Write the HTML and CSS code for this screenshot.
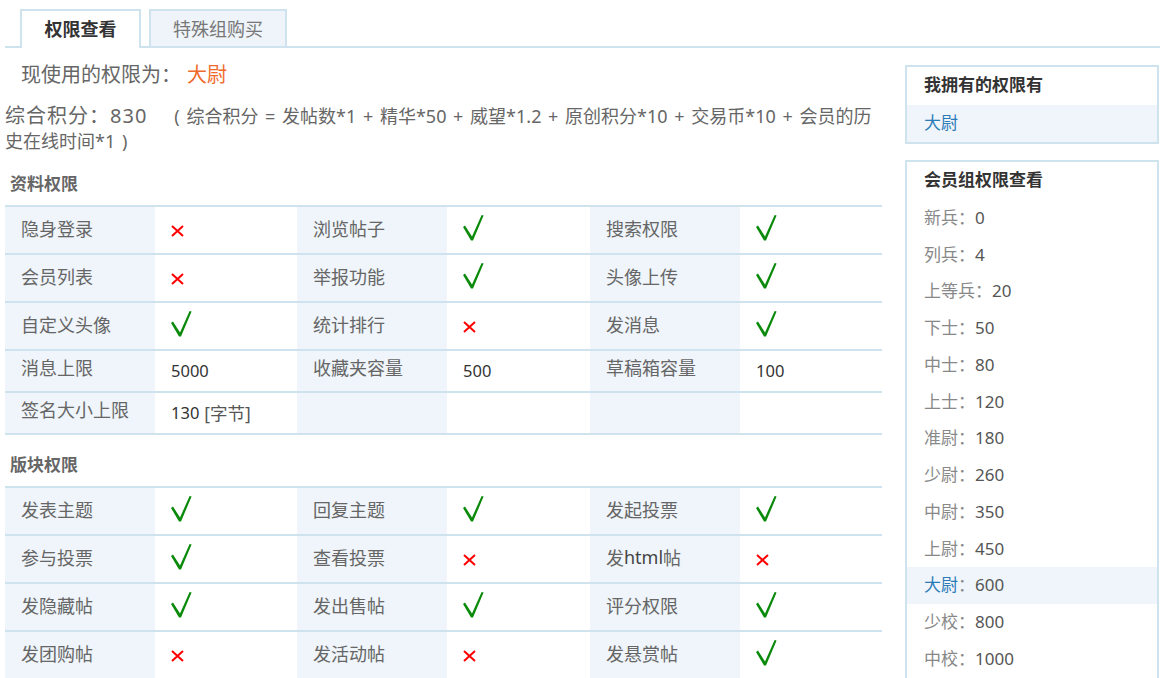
FILE: index.html
```html
<!DOCTYPE html>
<html lang="zh-CN">
<head>
<meta charset="utf-8">
<title>权限查看</title>
<link rel="stylesheet" href="styles.css">
</head>
<body>
<div class="page">
  <div class="tabs">
    <a class="tab tab-active">权限查看</a>
    <a class="tab">特殊组购买</a>
  </div>
  <div class="content">
    <div class="main">
      <p class="current">现使用的权限为：<span class="orange">大尉</span></p>
      <p class="score"><span class="score-label">综合积分：830</span><span class="formula">( 综合积分 = 发帖数*1 + 精华*50 + 威望*1.2 + 原创积分*10 + 交易币*10 + 会员的历<br>史在线时间*1 )</span></p>

      <h3 class="sec-title">资料权限</h3>
      <div class="ptable">
        <div class="prow icons">
          <div class="lab">隐身登录</div><div class="val"><svg class="no" viewBox="0 0 13 12"><path d="M1 1L12 11M12 1L1 11"/></svg></div>
          <div class="lab">浏览帖子</div><div class="val"><svg class="yes" viewBox="0 0 21 26"><polygon points="0,12 2,10.5 9,21.5 18.6,0 20.6,0.6 10,25.5 8,25.5"/></svg></div>
          <div class="lab">搜索权限</div><div class="val"><svg class="yes" viewBox="0 0 21 26"><polygon points="0,12 2,10.5 9,21.5 18.6,0 20.6,0.6 10,25.5 8,25.5"/></svg></div>
        </div>
        <div class="prow icons">
          <div class="lab">会员列表</div><div class="val"><svg class="no" viewBox="0 0 13 12"><path d="M1 1L12 11M12 1L1 11"/></svg></div>
          <div class="lab">举报功能</div><div class="val"><svg class="yes" viewBox="0 0 21 26"><polygon points="0,12 2,10.5 9,21.5 18.6,0 20.6,0.6 10,25.5 8,25.5"/></svg></div>
          <div class="lab">头像上传</div><div class="val"><svg class="yes" viewBox="0 0 21 26"><polygon points="0,12 2,10.5 9,21.5 18.6,0 20.6,0.6 10,25.5 8,25.5"/></svg></div>
        </div>
        <div class="prow icons">
          <div class="lab">自定义头像</div><div class="val"><svg class="yes" viewBox="0 0 21 26"><polygon points="0,12 2,10.5 9,21.5 18.6,0 20.6,0.6 10,25.5 8,25.5"/></svg></div>
          <div class="lab">统计排行</div><div class="val"><svg class="no" viewBox="0 0 13 12"><path d="M1 1L12 11M12 1L1 11"/></svg></div>
          <div class="lab">发消息</div><div class="val"><svg class="yes" viewBox="0 0 21 26"><polygon points="0,12 2,10.5 9,21.5 18.6,0 20.6,0.6 10,25.5 8,25.5"/></svg></div>
        </div>
        <div class="prow texts">
          <div class="lab">消息上限</div><div class="val num">5000</div>
          <div class="lab">收藏夹容量</div><div class="val num">500</div>
          <div class="lab">草稿箱容量</div><div class="val num">100</div>
        </div>
        <div class="prow texts">
          <div class="lab">签名大小上限</div><div class="val num">130 <span class="unit">[字节]</span></div>
          <div class="lab"></div><div class="val"></div>
          <div class="lab"></div><div class="val"></div>
        </div>
      </div>

      <h3 class="sec-title">版块权限</h3>
      <div class="ptable">
        <div class="prow icons">
          <div class="lab">发表主题</div><div class="val"><svg class="yes" viewBox="0 0 21 26"><polygon points="0,12 2,10.5 9,21.5 18.6,0 20.6,0.6 10,25.5 8,25.5"/></svg></div>
          <div class="lab">回复主题</div><div class="val"><svg class="yes" viewBox="0 0 21 26"><polygon points="0,12 2,10.5 9,21.5 18.6,0 20.6,0.6 10,25.5 8,25.5"/></svg></div>
          <div class="lab">发起投票</div><div class="val"><svg class="yes" viewBox="0 0 21 26"><polygon points="0,12 2,10.5 9,21.5 18.6,0 20.6,0.6 10,25.5 8,25.5"/></svg></div>
        </div>
        <div class="prow icons">
          <div class="lab">参与投票</div><div class="val"><svg class="yes" viewBox="0 0 21 26"><polygon points="0,12 2,10.5 9,21.5 18.6,0 20.6,0.6 10,25.5 8,25.5"/></svg></div>
          <div class="lab">查看投票</div><div class="val"><svg class="no" viewBox="0 0 13 12"><path d="M1 1L12 11M12 1L1 11"/></svg></div>
          <div class="lab">发<span class="latin">html</span>帖</div><div class="val"><svg class="no" viewBox="0 0 13 12"><path d="M1 1L12 11M12 1L1 11"/></svg></div>
        </div>
        <div class="prow icons">
          <div class="lab">发隐藏帖</div><div class="val"><svg class="yes" viewBox="0 0 21 26"><polygon points="0,12 2,10.5 9,21.5 18.6,0 20.6,0.6 10,25.5 8,25.5"/></svg></div>
          <div class="lab">发出售帖</div><div class="val"><svg class="yes" viewBox="0 0 21 26"><polygon points="0,12 2,10.5 9,21.5 18.6,0 20.6,0.6 10,25.5 8,25.5"/></svg></div>
          <div class="lab">评分权限</div><div class="val"><svg class="yes" viewBox="0 0 21 26"><polygon points="0,12 2,10.5 9,21.5 18.6,0 20.6,0.6 10,25.5 8,25.5"/></svg></div>
        </div>
        <div class="prow icons">
          <div class="lab">发团购帖</div><div class="val"><svg class="no" viewBox="0 0 13 12"><path d="M1 1L12 11M12 1L1 11"/></svg></div>
          <div class="lab">发活动帖</div><div class="val"><svg class="no" viewBox="0 0 13 12"><path d="M1 1L12 11M12 1L1 11"/></svg></div>
          <div class="lab">发悬赏帖</div><div class="val"><svg class="yes" viewBox="0 0 21 26"><polygon points="0,12 2,10.5 9,21.5 18.6,0 20.6,0.6 10,25.5 8,25.5"/></svg></div>
        </div>
      </div>
    </div>

    <aside class="side">
      <div class="box">
        <div class="box-title">我拥有的权限有</div>
        <div class="box-item hl"><span class="blue">大尉</span></div>
      </div>
      <div class="box box-long">
        <div class="box-title">会员组权限查看</div>
        <div class="box-item">新兵：<span class="n">0</span></div>
        <div class="box-item">列兵：<span class="n">4</span></div>
        <div class="box-item">上等兵：<span class="n">20</span></div>
        <div class="box-item">下士：<span class="n">50</span></div>
        <div class="box-item">中士：<span class="n">80</span></div>
        <div class="box-item">上士：<span class="n">120</span></div>
        <div class="box-item">准尉：<span class="n">180</span></div>
        <div class="box-item">少尉：<span class="n">260</span></div>
        <div class="box-item">中尉：<span class="n">350</span></div>
        <div class="box-item">上尉：<span class="n">450</span></div>
        <div class="box-item hl"><span class="blue">大尉</span>：<span class="n">600</span></div>
        <div class="box-item">少校：<span class="n">800</span></div>
        <div class="box-item">中校：<span class="n">1000</span></div>
      </div>
    </aside>
  </div>
</div>
</body>
</html>
```

FILE: styles.css
```css
* { box-sizing: border-box; }

html, body {
  margin: 0;
  padding: 0;
  background: #fff;
}

body {
  font-family: "Noto Sans", "Noto Sans CJK SC", sans-serif;
  color: #666;
  overflow: hidden;
}

.page {
  width: 1160px;
}

/* Tabs */
.tabs {
  display: flex;
  gap: 8px;
  margin-left: 5px;
  padding: 9px 0 0 15px;
  border-bottom: 2px solid #cfe3ee;
}

.tab {
  display: flex;
  align-items: center;
  justify-content: center;
  height: 37px;
  border: 2px solid #cfe3ee;
  border-bottom: none;
  font-size: 18px;
  color: #777;
  background: #eef4f9;
  width: 138px;
  padding-bottom: 2px;
}

.tab-active {
  width: 121px;
  height: 39px;
  margin-bottom: -2px;
  padding-bottom: 4px;
  background: #fff;
  color: #333;
  font-weight: bold;
}

/* Layout */
.content {
  display: flex;
  padding-left: 5px;
  gap: 23px;
  align-items: flex-start;
}

.main {
  width: 877px;
}

.current {
  margin: 13px 0 0;
  padding-left: 16px;
  font-size: 20px;
  line-height: 28px;
  color: #666;
}

.orange {
  color: #ef6a2b;
  margin-left: 6px;
}

.score {
  margin: 15px 0 0;
  line-height: 24px;
  color: #666;
}

.score-label {
  font-size: 20px;
  color: #666;
  letter-spacing: 1px;
  margin-right: 27px;
}

.formula {
  font-size: 18px;
  word-spacing: 2px;
}

.sec-title {
  margin: 0;
  padding: 18px 0 9px 5px;
  font-size: 17px;
  line-height: 24px;
  font-weight: bold;
  color: #666;
}

/* Permission table */
.ptable {
  border-top: 2px solid #cfe3ee;
}

.prow {
  display: grid;
  grid-template-columns: 150px 142px 150px 143px 150px 142px;
  border-bottom: 2px solid #cfe3ee;
}

.prow.icons { height: 48px; }
.prow.texts { height: 42px; }

.lab {
  display: flex;
  align-items: center;
  padding-left: 16px;
  padding-bottom: 5px;
  background: #eff5fa;
  font-size: 18px;
  color: #666;
}

.prow.texts .lab {
  padding-bottom: 9px;
}

.latin {
  color: #444;
}

.val {
  display: flex;
  align-items: center;
  padding-left: 16px;
  background: #fff;
}

.num {
  font-size: 16.5px;
  color: #333;
  padding-bottom: 1px;
}

.unit {
  color: #555;
  margin-left: 5px;
  font-size: 17.5px;
}

.yes {
  width: 21px;
  height: 26px;
  fill: #0a8a0a;
  margin-top: -4px;
}

.no {
  width: 13px;
  height: 12px;
  stroke: #f00;
  stroke-width: 2;
  fill: none;
  margin-top: 1px;
}

/* Sidebar */
.side {
  width: 254px;
  margin-top: 17px;
  display: flex;
  flex-direction: column;
  gap: 16px;
}

.box {
  border: 2px solid #cfe3ee;
}

.box-long {
  padding-bottom: 30px;
}

.box-title {
  height: 38px;
  line-height: 36px;
  padding-left: 17px;
  font-size: 17px;
  font-weight: bold;
  color: #333;
}

.box-item {
  height: 36.75px;
  line-height: 36.75px;
  padding-left: 17px;
  font-size: 17px;
  color: #888;
}

.box-item.hl {
  background: #eff5fa;
}

.box-item .n {
  color: #555;
}

.blue { color: #2b7bb9; }
```
